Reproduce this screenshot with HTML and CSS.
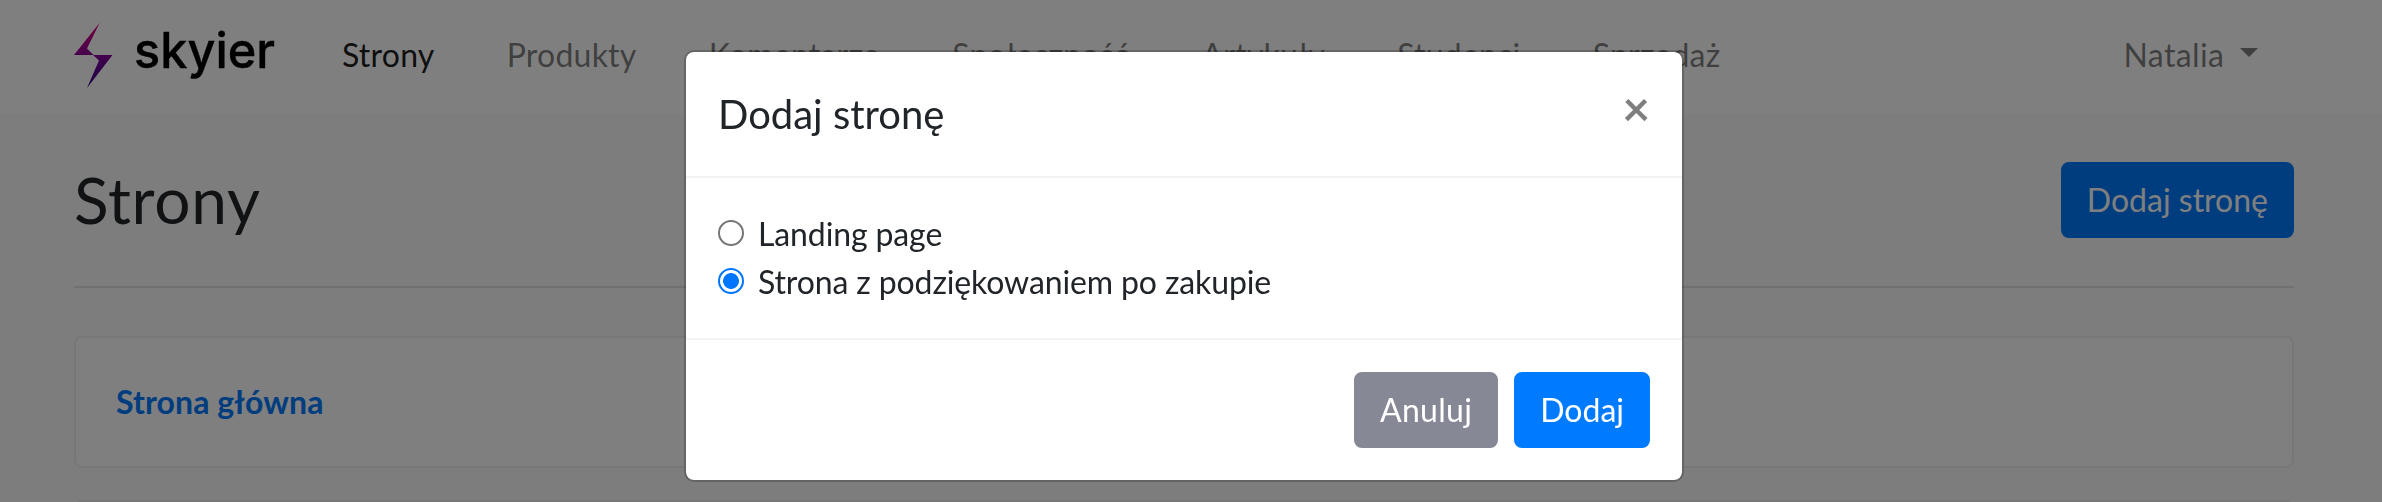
FILE: index.html
```html
<!DOCTYPE html>
<html lang="pl">
<head>
<meta charset="utf-8">
<title>Strony</title>
<link rel="stylesheet" href="styles.css">
</head>
<body>
<header class="navbar">
  <a class="brand" aria-label="skyier">
    <svg width="214" height="90" viewBox="0 -5 214 90">
      <defs>
        <linearGradient id="bolt" gradientUnits="userSpaceOnUse" x1="0" y1="6" x2="0" y2="71">
          <stop offset="0" stop-color="#e8007c"/>
          <stop offset="0.5" stop-color="#8a0098"/>
          <stop offset="1" stop-color="#2a0090"/>
        </linearGradient>
      </defs>
      <path fill="url(#bolt)" d="M25.7 5.7L0 38H19.5L13 31.5ZM19 38H38.5L13 71L25 43.5Z"/>
      <text class="wordmark" x="60" y="51" textLength="141" lengthAdjust="spacingAndGlyphs">skyier</text>
    </svg>
  </a>
  <nav class="links">
    <a class="link active">Strony</a>
    <a class="link">Produkty</a>
    <a class="link">Komentarze</a>
    <a class="link">Społeczność</a>
    <a class="link">Artykuły</a>
    <a class="link">Studenci</a>
    <a class="link">Sprzedaż</a>
  </nav>
  <a class="user">Natalia<span class="caret"></span></a>
</header>
<main class="page">
  <div class="page-head">
    <h1 class="page-title">Strony</h1>
    <button class="btn primary">Dodaj stronę</button>
  </div>
  <div class="card"><a class="card-link">Strona główna</a></div>
  <div class="card"></div>
</main>
<div class="backdrop">
  <section class="modal" role="dialog">
    <div class="modal-header">
      <h5 class="modal-title">Dodaj stronę</h5>
      <button class="close">×</button>
    </div>
    <div class="modal-body">
      <label class="check"><input class="radio" type="radio" name="type">Landing page</label>
      <label class="check"><input class="radio" type="radio" name="type" checked>Strona z podziękowaniem po zakupie</label>
    </div>
    <div class="modal-footer">
      <button class="btn secondary">Anuluj</button>
      <button class="btn primary">Dodaj</button>
    </div>
  </section>
</div>
</body>
</html>
```
FILE: styles.css
```css
* { box-sizing: border-box; }
html { height: 100%; overflow: hidden; }
body {
  display: flex;
  flex-direction: column;
  margin: 0;
  height: 100%;
  overflow: hidden;
  background: #fafafa;
  color: #212529;
  font: 32px/48px Lato, sans-serif;
}
.navbar {
  display: flex;
  flex: none;
  align-items: center;
  height: 114px;
  padding: 0 124px 5px 74px;
  background: #fff;
}
.brand { display: flex; }
.brand svg { margin-top: 5px; overflow: visible; }
.wordmark {
  font: 500 50px Inter, sans-serif;
  fill: #000;
  stroke: #000;
  stroke-width: .4px;
}
.links { display: flex; gap: 72.2px; margin-left: 54px; letter-spacing: .22px; }
.link, .user { color: rgba(0, 0, 0, .5); }
.link.active { color: rgba(0, 0, 0, .9); }
.user { display: flex; align-items: center; margin-left: auto; letter-spacing: .4px; }
.caret {
  margin: -4px 0 0 15.6px;
  border-top: 9.6px solid;
  border-left: 9.6px solid transparent;
  border-right: 9.6px solid transparent;
}
.page {
  flex: 1;
  min-height: 0;
  overflow: hidden;
  padding: 48px 88px 0 74px;
}
.page-head {
  display: flex;
  align-items: center;
  justify-content: space-between;
  height: 126px;
  padding-bottom: 48px;
  margin-bottom: 48px;
  border-bottom: 2px solid #e1e1e1;
}
.page-title {
  margin: 0;
  font-size: 64px;
  font-weight: 400;
  line-height: 76px;
  letter-spacing: .7px;
}
.btn {
  height: 76px;
  padding: 12px 24px;
  border: 2px solid transparent;
  border-radius: 8px;
  color: #fff;
  font: 32px/48px Lato, sans-serif;
}
.primary { background: #007bff; border-color: #007bff; }
.secondary { background: #868896; border-color: #868896; letter-spacing: .3px; }
.card {
  height: 132px;
  padding: 40px;
  margin-bottom: 32px;
  background: #fff;
  border: 2px solid #efefef;
  border-radius: 8px;
}
.card-link { color: #007bff; font-weight: 700; letter-spacing: .1px; }
.backdrop {
  position: fixed;
  inset: 0;
  padding: 50px 14px 0 0;
  background: rgba(0, 0, 0, .5);
}
.modal {
  width: 1000px;
  margin: 0 auto;
  background: #fff;
  background-clip: padding-box;
  border: 2px solid rgba(0, 0, 0, .2);
  border-radius: 10px;
}
.modal-header {
  display: flex;
  align-items: flex-start;
  justify-content: space-between;
  padding: 32px;
  border-bottom: 2px solid #f2f2f2;
}
.modal-title { margin: 0; font-size: 40px; font-weight: 400; line-height: 60px; }
.close {
  margin: 0;
  padding: 0;
  border: 0;
  background: none;
  color: #000;
  opacity: .5;
  font: 700 48px/48px Lato, sans-serif;
}
.modal-body { padding: 32px; }
.check { display: flex; align-items: flex-start; letter-spacing: -.12px; }
.radio {
  appearance: none;
  width: 26px;
  height: 26px;
  margin: 10px 14px 0 0;
  border: 2px solid #767676;
  border-radius: 50%;
  background: #fff;
}
.radio:checked {
  border-color: #0075ff;
  background: radial-gradient(circle, #0075ff 7.5px, #fff 8.3px);
}
.modal-footer {
  display: flex;
  justify-content: flex-end;
  gap: 16px;
  padding: 32px;
  border-top: 2px solid #f2f2f2;
}
```
